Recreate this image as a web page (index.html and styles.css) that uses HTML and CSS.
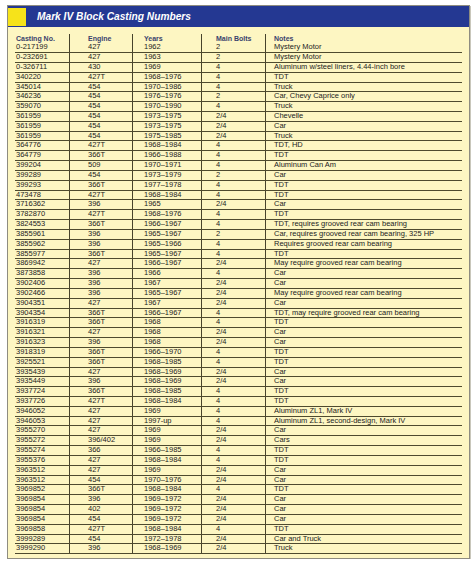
FILE: index.html
```html
<!DOCTYPE html>
<html>
<head>
<meta charset="utf-8">
<link rel="stylesheet" href="styles.css">
</head>
<body>
<div class="panel">
  <div class="titlebar">
    <div class="swatch"></div>
    <div class="title">Mark IV Block Casting Numbers</div>
  </div>
  <div class="table">
    <div class="row head"><div>Casting No.</div><div class="c2">Engine</div><div class="c3">Years</div><div class="c4">Main Bolts</div><div class="c5">Notes</div></div>
    <div class="row"><div>0-217199</div><div class="c2">427</div><div class="c3">1962</div><div class="c4">2</div><div class="c5">Mystery Motor</div></div>
    <div class="row"><div>0-232691</div><div class="c2">427</div><div class="c3">1963</div><div class="c4">2</div><div class="c5">Mystery Motor</div></div>
    <div class="row"><div>0-326711</div><div class="c2">430</div><div class="c3">1969</div><div class="c4">4</div><div class="c5">Aluminum w/steel liners, 4.44-inch bore</div></div>
    <div class="row"><div>340220</div><div class="c2">427T</div><div class="c3">1968–1976</div><div class="c4">4</div><div class="c5">TDT</div></div>
    <div class="row"><div>345014</div><div class="c2">454</div><div class="c3">1970–1986</div><div class="c4">4</div><div class="c5">Truck</div></div>
    <div class="row"><div>346236</div><div class="c2">454</div><div class="c3">1976–1976</div><div class="c4">2</div><div class="c5">Car, Chevy Caprice only</div></div>
    <div class="row"><div>359070</div><div class="c2">454</div><div class="c3">1970–1990</div><div class="c4">4</div><div class="c5">Truck</div></div>
    <div class="row"><div>361959</div><div class="c2">454</div><div class="c3">1973–1975</div><div class="c4">2/4</div><div class="c5">Chevelle</div></div>
    <div class="row"><div>361959</div><div class="c2">454</div><div class="c3">1973–1975</div><div class="c4">2/4</div><div class="c5">Car</div></div>
    <div class="row"><div>361959</div><div class="c2">454</div><div class="c3">1975–1985</div><div class="c4">2/4</div><div class="c5">Truck</div></div>
    <div class="row"><div>364776</div><div class="c2">427T</div><div class="c3">1968–1984</div><div class="c4">4</div><div class="c5">TDT, HD</div></div>
    <div class="row"><div>364779</div><div class="c2">366T</div><div class="c3">1966–1988</div><div class="c4">4</div><div class="c5">TDT</div></div>
    <div class="row"><div>399204</div><div class="c2">509</div><div class="c3">1970–1971</div><div class="c4">4</div><div class="c5">Aluminum Can Am</div></div>
    <div class="row"><div>399289</div><div class="c2">454</div><div class="c3">1973–1979</div><div class="c4">2</div><div class="c5">Car</div></div>
    <div class="row"><div>399293</div><div class="c2">366T</div><div class="c3">1977–1978</div><div class="c4">4</div><div class="c5">TDT</div></div>
    <div class="row"><div>473478</div><div class="c2">427T</div><div class="c3">1968–1984</div><div class="c4">4</div><div class="c5">TDT</div></div>
    <div class="row"><div>3716362</div><div class="c2">396</div><div class="c3">1965</div><div class="c4">2/4</div><div class="c5">Car</div></div>
    <div class="row"><div>3782870</div><div class="c2">427T</div><div class="c3">1968–1976</div><div class="c4">4</div><div class="c5">TDT</div></div>
    <div class="row"><div>3824553</div><div class="c2">366T</div><div class="c3">1966–1967</div><div class="c4">4</div><div class="c5">TDT, requires grooved rear cam bearing</div></div>
    <div class="row"><div>3855961</div><div class="c2">396</div><div class="c3">1965–1967</div><div class="c4">2</div><div class="c5">Car, requires grooved rear cam bearing, 325 HP</div></div>
    <div class="row"><div>3855962</div><div class="c2">396</div><div class="c3">1965–1966</div><div class="c4">4</div><div class="c5">Requires grooved rear cam bearing</div></div>
    <div class="row"><div>3855977</div><div class="c2">366T</div><div class="c3">1965–1967</div><div class="c4">4</div><div class="c5">TDT</div></div>
    <div class="row"><div>3869942</div><div class="c2">427</div><div class="c3">1966–1967</div><div class="c4">2/4</div><div class="c5">May require grooved rear cam bearing</div></div>
    <div class="row"><div>3873858</div><div class="c2">396</div><div class="c3">1966</div><div class="c4">4</div><div class="c5">Car</div></div>
    <div class="row"><div>3902406</div><div class="c2">396</div><div class="c3">1967</div><div class="c4">2/4</div><div class="c5">Car</div></div>
    <div class="row"><div>3902466</div><div class="c2">396</div><div class="c3">1965–1967</div><div class="c4">2/4</div><div class="c5">May require grooved rear cam bearing</div></div>
    <div class="row"><div>3904351</div><div class="c2">427</div><div class="c3">1967</div><div class="c4">2/4</div><div class="c5">Car</div></div>
    <div class="row"><div>3904354</div><div class="c2">366T</div><div class="c3">1966–1967</div><div class="c4">4</div><div class="c5">TDT, may require grooved rear cam bearing</div></div>
    <div class="row"><div>3916319</div><div class="c2">366T</div><div class="c3">1968</div><div class="c4">4</div><div class="c5">TDT</div></div>
    <div class="row"><div>3916321</div><div class="c2">427</div><div class="c3">1968</div><div class="c4">2/4</div><div class="c5">Car</div></div>
    <div class="row"><div>3916323</div><div class="c2">396</div><div class="c3">1968</div><div class="c4">2/4</div><div class="c5">Car</div></div>
    <div class="row"><div>3918319</div><div class="c2">366T</div><div class="c3">1966–1970</div><div class="c4">4</div><div class="c5">TDT</div></div>
    <div class="row"><div>3925521</div><div class="c2">366T</div><div class="c3">1968–1985</div><div class="c4">4</div><div class="c5">TDT</div></div>
    <div class="row"><div>3935439</div><div class="c2">427</div><div class="c3">1968–1969</div><div class="c4">2/4</div><div class="c5">Car</div></div>
    <div class="row"><div>3935449</div><div class="c2">396</div><div class="c3">1968–1969</div><div class="c4">2/4</div><div class="c5">Car</div></div>
    <div class="row"><div>3937724</div><div class="c2">366T</div><div class="c3">1968–1985</div><div class="c4">4</div><div class="c5">TDT</div></div>
    <div class="row"><div>3937726</div><div class="c2">427T</div><div class="c3">1968–1984</div><div class="c4">4</div><div class="c5">TDT</div></div>
    <div class="row"><div>3946052</div><div class="c2">427</div><div class="c3">1969</div><div class="c4">4</div><div class="c5">Aluminum ZL1, Mark IV</div></div>
    <div class="row"><div>3946053</div><div class="c2">427</div><div class="c3">1997-up</div><div class="c4">4</div><div class="c5">Aluminum ZL1, second-design, Mark IV</div></div>
    <div class="row"><div>3955270</div><div class="c2">427</div><div class="c3">1969</div><div class="c4">2/4</div><div class="c5">Car</div></div>
    <div class="row"><div>3955272</div><div class="c2">396/402</div><div class="c3">1969</div><div class="c4">2/4</div><div class="c5">Cars</div></div>
    <div class="row"><div>3955274</div><div class="c2">366</div><div class="c3">1966–1985</div><div class="c4">4</div><div class="c5">TDT</div></div>
    <div class="row"><div>3955376</div><div class="c2">427</div><div class="c3">1968–1984</div><div class="c4">4</div><div class="c5">TDT</div></div>
    <div class="row"><div>3963512</div><div class="c2">427</div><div class="c3">1969</div><div class="c4">2/4</div><div class="c5">Car</div></div>
    <div class="row"><div>3963512</div><div class="c2">454</div><div class="c3">1970–1976</div><div class="c4">2/4</div><div class="c5">Car</div></div>
    <div class="row"><div>3969852</div><div class="c2">366T</div><div class="c3">1968–1984</div><div class="c4">4</div><div class="c5">TDT</div></div>
    <div class="row"><div>3969854</div><div class="c2">396</div><div class="c3">1969–1972</div><div class="c4">2/4</div><div class="c5">Car</div></div>
    <div class="row"><div>3969854</div><div class="c2">402</div><div class="c3">1969–1972</div><div class="c4">2/4</div><div class="c5">Car</div></div>
    <div class="row"><div>3969854</div><div class="c2">454</div><div class="c3">1969–1972</div><div class="c4">2/4</div><div class="c5">Car</div></div>
    <div class="row"><div>3969858</div><div class="c2">427T</div><div class="c3">1968–1984</div><div class="c4">4</div><div class="c5">TDT</div></div>
    <div class="row"><div>3999289</div><div class="c2">454</div><div class="c3">1972–1978</div><div class="c4">2/4</div><div class="c5">Car and Truck</div></div>
    <div class="row"><div>3999290</div><div class="c2">396</div><div class="c3">1968–1969</div><div class="c4">2/4</div><div class="c5">Truck</div></div>
  </div>
</div>
</body>
</html>
```
FILE: styles.css
```css
html, body {
  margin: 0;
  padding: 0;
  background: #ffffff;
}

body {
  font-family: "Liberation Sans", Arial, sans-serif;
}

.panel {
  margin: 5px 0 0 7px;
  width: 461px;
  height: 552px;
  border: 1px solid #8e8c80;
  background: #fdf6c2;
  box-shadow: 1px 1px 0 #c9c7bb;
}

.titlebar {
  display: flex;
  align-items: center;
  height: 21px;
  background: #243892;
}

.swatch {
  width: 18px;
  height: 18px;
  background: #f6e31a;
  flex: none;
}

.title {
  margin-left: 11px;
  color: #ffffff;
  font-weight: bold;
  font-style: italic;
  font-size: 10.2px;
  line-height: 12px;
  padding-top: 1px;
}

.table {
  margin: 6.5px 7px 0 7px;
  width: 447px;
}

.row {
  display: grid;
  grid-template-columns: 55px 63px 69px 64px 196px;
  height: 9.84px;
  box-sizing: border-box;
  border-bottom: 1px solid #4e4a2e;
  font-size: 7.5px;
  line-height: 8.84px;
  color: #23231e;
  white-space: nowrap;
}

.row > div {
  border-right: 1px solid #47432b;
  padding-left: 1px;
  overflow: hidden;
}

.row > div.c2 { padding-left: 18px; }
.row > div.c3 { padding-left: 11px; }
.row > div.c4 { padding-left: 14px; }
.row > div.c5 { padding-left: 8px; border-right: none; }

.row.head {
  border-bottom: none;
  height: 9.7px;
  font-size: 7px;
  font-weight: bold;
  color: #3a426c;
  line-height: 9.7px;
}
```
